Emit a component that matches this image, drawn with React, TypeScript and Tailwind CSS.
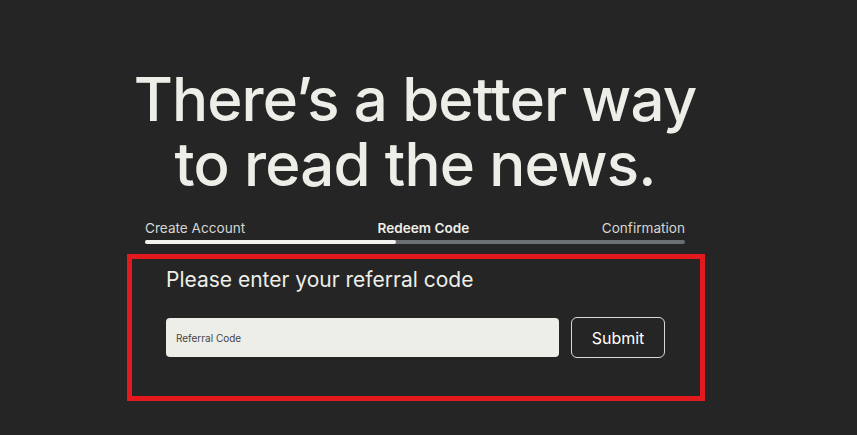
export default function App() {
  return (
    <main className="min-h-[435px] w-full bg-[#252525] font-['Inter',sans-serif] text-[#eeeee8]">
      <div className="ml-[145px] w-[540px] pt-[67px]">
        <h1 className="-mx-[20px] text-center text-[60px] font-medium leading-[65px] tracking-[-0.85px]">
          There’s a better way
          <br />
          to read the news.
        </h1>

        <div className="mt-[21px] flex justify-between text-[13.6px] leading-[20px] text-[#d6d6d2]">
          <span>Create Account</span>
          <span className="font-semibold text-[#eeeee8]">Redeem Code</span>
          <span>Confirmation</span>
        </div>
        <div className="mt-[2px] h-[4px] w-full rounded-full bg-[#6b6e73]">
          <div className="h-full w-[251px] rounded-full bg-[#f2f2ee]" />
        </div>

        <div className="-ml-[18px] mt-[10px] h-[147px] w-[578px] border-[5px] border-[#e3191e] pl-[34px] pt-[7px]">
          <p className="text-[21px] leading-[28px] text-[#eeeee8]">Please enter your referral code</p>
          <div className="mt-[23px] flex items-center gap-[12px]">
            <input
              placeholder="Referral Code"
              className="h-[39px] w-[393px] rounded-[4px] bg-[#eeeee8] px-[10px] text-[10px] text-[#333] outline-none placeholder:text-[#444]"
            />
            <button className="h-[41px] w-[94px] rounded-[6px] border border-[#d8d8d8] text-[16px] text-white">
              Submit
            </button>
          </div>
        </div>
      </div>
    </main>
  );
}
